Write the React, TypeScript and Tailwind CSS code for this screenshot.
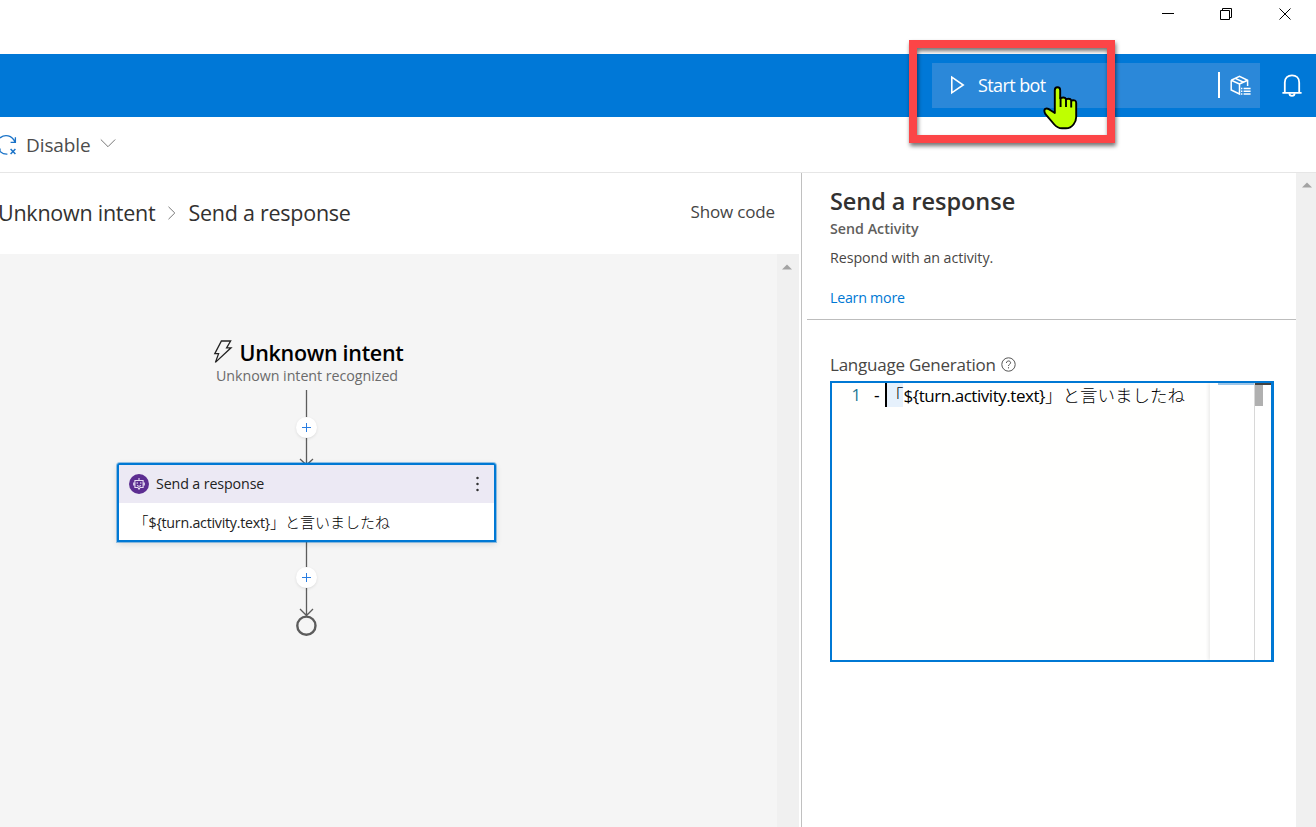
import React from "react";

function TitleBar() {
  return (
    <div className="flex h-[54px] shrink-0 justify-end bg-white">
      <svg className="h-7 w-[156px]" viewBox="0 0 156 28" fill="none" stroke="#000" strokeWidth="1">
        <path d="M2 13.5h12" />
        <path d="M60.5 10.5h9v9h-9zM62.5 10.5v-2h9v9h-2" />
        <path d="M119.5 8.5l11 11M130.5 8.5l-11 11" />
      </svg>
    </div>
  );
}

function Header() {
  return (
    <div className="flex h-[63px] shrink-0 items-start justify-end bg-[#0078d7]">
      <div className="mt-[9px] flex h-[45px] w-[328px] items-center bg-[#2b88d9] text-white">
        <svg className="mb-px ml-[18px] h-5 w-4" viewBox="0 0 16 20" fill="none" stroke="#fff" strokeWidth="1.6">
          <path d="M1.8 2.2L13.2 10L1.8 17.8z" />
        </svg>
        <span className="mb-px ml-3 text-[18px] leading-6 tracking-[-0.6px] whitespace-pre">Start bot</span>
        <div className="mb-px ml-auto h-[26px] w-[2px] bg-white" />
        <svg className="mr-[9px] ml-[10px] h-[21px] w-[21px]" viewBox="0 0 21 21" fill="none" stroke="#fff" strokeWidth="1.5">
          <path d="M1.2 5.2L9.5 1.4L17.6 5.2V11M1.2 5.2V15L9.5 19V9L1.2 5.2M9.5 9L17.6 5.2M5.2 3.4L13.6 7.2" />
          <path d="M11 13.5h1.4M13.6 13.5h7M11 16.2h1.4M13.6 16.2h7M11 18.9h1.4M13.6 18.9h7" />
        </svg>
      </div>
      <svg className="mt-[19px] mr-[14px] ml-[22px] h-6 w-5" viewBox="0 0 20 24" fill="none" stroke="#fff" strokeWidth="1.8">
        <path d="M2.8 19.8V9.4C2.8 4.8 5.9 2.3 10 2.3S17.2 4.8 17.2 9.4V19.8M.4 19.8H19.6" />
        <path d="M7.4 20.2A2.6 2.6 0 0 0 12.6 20.2" />
      </svg>
    </div>
  );
}

function Toolbar() {
  return (
    <div className="flex h-[56px] shrink-0 items-center border-b border-[#e6e6e6] bg-white">
      <svg className="h-[22px] w-[17px]" viewBox="0 0 17 22" fill="none" stroke="#1a73c8" strokeWidth="1.3">
        <path d="M0 3.9C5 -0.2 12 1.2 15 8M15.4 3.2V8.3H10.6" />
        <path d="M0 17.4C2 19.2 4.6 20.3 7.4 20.1M0 14.5v3.2" />
        <path d="M10.6 15l4.8 5M15.4 15l-4.8 5" strokeWidth="1.5" />
      </svg>
      <span className="ml-[9px] text-[19px] leading-6 tracking-[-0.1px] text-[#4c4c4c]">Disable</span>
      <svg className="mb-[3px] ml-[9px] h-[10px] w-4" viewBox="0 0 16 10" fill="none" stroke="#777" strokeWidth="1">
        <path d="M.8 1.5L8 8.7L15.2 1.5" />
      </svg>
    </div>
  );
}

function Phrase({ latin }: { latin: string }) {
  return (
    <span className="font-light whitespace-pre">
      「<span className={"font-normal " + latin}>{"${turn.activity.text}"}</span>」と言いましたね
    </span>
  );
}

function AddButton({ place }: { place: string }) {
  return (
    <div className={"absolute left-[296px] h-[21px] w-[21px] rounded-full bg-white shadow-[0_1px_3px_rgba(0,0,0,0.1)] " + place}>
      <svg className="h-[21px] w-[21px]" viewBox="0 0 21 21" stroke="#2a7de1" strokeWidth="1">
        <path d="M6 10.5h9M10.5 6v9" />
      </svg>
    </div>
  );
}

function Canvas() {
  return (
    <div className="flex min-h-0 flex-1 bg-[#f5f5f5]">
      <div className="relative flex-1">
        <svg className="absolute top-0 left-0 h-[400px] w-[600px]" viewBox="0 254 600 400" fill="none" stroke="#5c5c5c" strokeWidth="1.3">
          <path d="M306.5 390V464M300 459l6.5 6l6.5-6M306.5 541V615M300 609l6.5 6.5l6.5-6.5" />
          <circle cx="306.4" cy="625.7" r="9.1" strokeWidth="2.4" />
          <path d="M221.4 341h9.2l-4 6.8h4.4L215.4 362.4l3.2-8.800h-3.800z" stroke="#222" strokeWidth="1.3" />
        </svg>
        <div className="absolute top-[84px] left-[239.5px] text-[21.5px] leading-[30px] font-semibold tracking-[-0.3px] whitespace-pre text-black">
          Unknown intent
        </div>
        <div className="absolute top-[112px] left-[216px] text-[14.25px] leading-5 tracking-[-0.04px] whitespace-pre text-[#6b6b6b]">
          Unknown intent recognized
        </div>
        <AddButton place="top-[163px]" />
        <AddButton place="top-[313px]" />
        <div className="absolute top-[209px] left-[117px] flex h-[79px] w-[379px] flex-col overflow-hidden rounded-t-[3px] border-2 border-[#0078d4] bg-white shadow-[0_0_0_1px_rgba(0,120,212,0.4),0_2px_6px_rgba(0,0,0,0.12)]">
          <div className="flex h-[38px] shrink-0 items-center bg-[#ece9f4] pb-px pl-[10px]">
            <svg className="h-5 w-5" viewBox="0 0 20 20" fill="none" stroke="#e6dcf2" strokeWidth="1.1">
              <circle cx="10" cy="10" r="10" fill="#5c2d91" stroke="none" />
              <path d="M5.900 6.500h8.200v7h-3L10 15.200l-1.100-1.700h-3zM10 4v2.500M4.700 8.500v3M15.300 8.500v3" />
              <path d="M8 11.300c1 .9 3 .9 4 0M8.200 8.200v1.500M11.800 8.200v1.500" />
            </svg>
            <span className="ml-[7px] text-[14.25px] leading-5 tracking-[-0.12px] whitespace-pre text-[#222]">Send a response</span>
            <svg className="mr-[15px] ml-auto h-4 w-[3px]" viewBox="0 0 3 16" fill="#333">
              <circle cx="1.5" cy="2" r="1.25" />
              <circle cx="1.5" cy="8" r="1.25" />
              <circle cx="1.5" cy="14" r="1.25" />
            </svg>
          </div>
          <div className="flex flex-1 items-center pt-px pl-[14.5px] font-['Open_Sans','Noto_Sans_CJK_JP',sans-serif] text-[15px] leading-5 text-black">
            <Phrase latin="text-[14.25px] tracking-[-0.25px] text-[#222]" />
          </div>
        </div>
      </div>
      <div className="flex w-[22px] justify-center bg-[#f0f0f0]">
        <svg className="mt-[10px] mr-[2px] h-[6px] w-[10px]" viewBox="0 0 10 6" fill="#a3a3a3">
          <path d="M5 0.5L10 5.5H0z" />
        </svg>
      </div>
      <div className="w-[2px] bg-white" />
    </div>
  );
}

function LeftPane() {
  return (
    <div className="flex w-[802px] shrink-0 flex-col border-r border-[#c0c0c0] bg-white">
      <div className="flex h-[81px] shrink-0 items-center pb-[2px] text-[21.5px] leading-[30px] text-[#323130]">
        <span className="-indent-[2px] tracking-[-0.25px] whitespace-pre">Unknown intent</span>
        <svg className="ml-3 h-[14px] w-[9px]" viewBox="0 0 9 14" fill="none" stroke="#777" strokeWidth="1">
          <path d="M1.5 .8L7.8 7L1.5 13.2" />
        </svg>
        <span className="ml-3 tracking-[-0.25px] whitespace-pre">Send a response</span>
        <span className="mr-[26px] mb-[2px] ml-auto text-[17px] leading-6 tracking-[-0.15px] whitespace-pre text-[#444]">Show code</span>
      </div>
      <Canvas />
    </div>
  );
}

function Editor() {
  return (
    <div className="mt-1 flex h-[281px] w-[444px] border-2 border-r-[3px] border-[#0078d4] bg-[#fffffe]">
      <div className="flex h-6 w-[378px] items-center font-['Open_Sans','Noto_Sans_CJK_JP',sans-serif] text-[17.5px] text-black">
        <span className="w-[29px] text-right text-[16.5px] text-[#237893]">1</span>
        <span className="ml-[13px] w-[11px]">-</span>
        <span className="h-6 w-[2px] shrink-0 bg-black" />
        <span className="mr-[-17px] h-6 w-4 shrink-0 bg-[#e6f1fc]" />
        <span className="relative leading-6">
          <Phrase latin="text-[17px] tracking-[-0.46px]" />
        </span>
      </div>
      <div className="w-[45px] border-r border-[#d8d8d8] bg-white shadow-[-2px_0_3px_rgba(0,0,0,0.07)]">
        <div className="ml-2 h-[2px] w-9 bg-[#9cc5e8]" />
      </div>
      <div className="flex-1 bg-white">
        <div className="h-[2px] bg-[#424242]" />
        <div className="h-[21px] w-2 bg-[#b0b0b0]" />
      </div>
    </div>
  );
}

function PropertyPane() {
  return (
    <div className="flex min-w-0 flex-1 bg-white">
      <div className="flex flex-1 flex-col">
        <div className="ml-[5px] flex h-[147px] shrink-0 flex-col border-b border-[#bdbdbd] pl-[23px]">
          <h1 className="mt-3 text-[23.5px] leading-8 font-semibold tracking-[-0.05px] text-[#323130]">Send a response</h1>
          <p className="mt-[2px] text-[14.25px] leading-5 font-semibold text-[#605e5c]">Send Activity</p>
          <p className="mt-[9px] text-[14.25px] leading-5 tracking-[-0.06px] text-[#484644]">Respond with an activity.</p>
          <a className="mt-5 text-[14.25px] leading-5 tracking-[-0.25px] text-[#0078d4]">Learn more</a>
        </div>
        <div className="mt-[33px] ml-[28px]">
          <div className="flex h-6 items-center text-[17px] leading-6 text-[#484644]">
            <span className="tracking-[-0.24px] whitespace-pre">Language Generation</span>
            <svg className="mb-[2px] ml-[5px] h-[15px] w-[15px]" viewBox="0 0 15 15" fill="none" stroke="#555" strokeWidth="1">
              <circle cx="7.5" cy="7.5" r="6.7" />
              <path d="M5.4 6C5.4 3.3 9.6 3.3 9.6 5.8C9.6 7.3 7.5 7.2 7.5 9M7.5 10.2v1.2" />
            </svg>
          </div>
          <Editor />
        </div>
      </div>
      <div className="flex w-5 justify-center bg-[#f0f0f0]">
        <svg className="mt-[9px] ml-px h-[6px] w-[10px]" viewBox="0 0 10 6" fill="#a3a3a3">
          <path d="M5 0.5L10 5.5H0z" />
        </svg>
      </div>
    </div>
  );
}

export default function App() {
  return (
    <div className="relative flex h-[827px] w-[1316px] flex-col overflow-hidden bg-white font-['Open_Sans',sans-serif]">
      <TitleBar />
      <Header />
      <Toolbar />
      <div className="flex min-h-0 flex-1">
        <LeftPane />
        <PropertyPane />
      </div>
      <svg className="absolute top-[30px] left-[899px] h-[130px] w-[230px]" viewBox="899 30 230 130" fill="none">
        <defs>
          <filter id="drop" x="-10%" y="-10%" width="120%" height="130%">
            <feDropShadow dx="1" dy="3" stdDeviation="2.2" floodColor="#000" floodOpacity="0.55" />
          </filter>
        </defs>
        <rect x="913" y="44" width="198" height="95" stroke="#fc4446" strokeWidth="8" filter="url(#drop)" />
        <path
          d="M1054.8 90.2Q1054.8 87.3 1057.5 87.3Q1060.2 87.3 1060.2 90.2V98.2Q1064.8 96.3 1066 99.2Q1070.3 97.7 1071.3 100.5Q1076.2 99.3 1076.2 103V117Q1076.2 121 1073.5 124.5Q1070.5 128.3 1066 128.3H1062Q1057.5 128.3 1054.3 124.5L1045.5 114.2Q1043.3 110.5 1045.3 108.8Q1047.5 107.6 1050.5 110.2L1054.8 113z"
          fill="#bfff00"
          stroke="#000"
          strokeWidth="1.9"
          strokeLinejoin="round"
        />
        <path d="M1060.6 97.5V107M1066 99V107M1071.2 100.5V107.5" stroke="#000" strokeWidth="1.9" />
      </svg>
    </div>
  );
}
